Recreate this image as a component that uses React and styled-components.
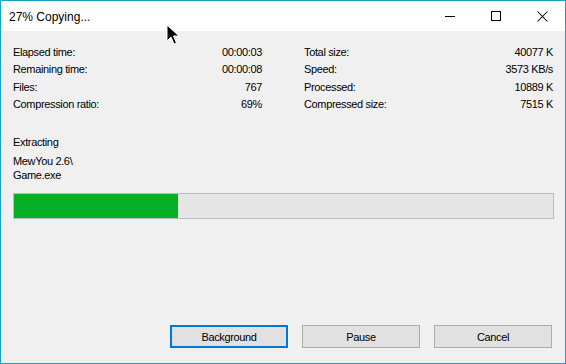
import React from "react";
import styled, { createGlobalStyle } from "styled-components";

const Global = createGlobalStyle`
  html, body { margin: 0; padding: 0; background: #ffffff; }
  * { box-sizing: border-box; }
`;

const Window = styled.div`
  position: relative;
  width: 566px;
  height: 364px;
  border: 1px solid #1ba1c6;
  background: #f0f0f0;
  display: flex;
  flex-direction: column;
  font-family: "Liberation Sans", Arial, sans-serif;
  color: #000;
  overflow: hidden;
`;

const TitleBar = styled.div`
  height: 30px;
  background: #ffffff;
  display: flex;
  align-items: center;
  flex-shrink: 0;
`;

const Title = styled.div`
  flex: 1;
  padding-left: 8px;
  font-size: 12px;
  line-height: 30px;
  padding-top: 1px;
`;

const CaptionButton = styled.div`
  width: 46px;
  height: 30px;
  display: flex;
  align-items: center;
  justify-content: center;
  svg { display: block; }
`;

const Body = styled.div`
  flex: 1;
  display: flex;
  flex-direction: column;
  padding: 12.5px 12px 15px 12px;
  font-size: 11px;
  letter-spacing: -0.35px;
`;

const Stats = styled.div`
  display: grid;
  grid-template-columns: 249px 249px;
  column-gap: 42px;
`;

const Column = styled.div`
  display: flex;
  flex-direction: column;
`;

const StatRow = styled.div`
  display: flex;
  justify-content: space-between;
  height: 17.6px;
  line-height: 17.6px;
`;

const Label = styled.span``;
const Value = styled.span`
  text-align: right;
`;

const Status = styled.div`
  margin-top: 21.5px;
  line-height: 14px;
`;

const Path = styled.div`
  margin-top: 5px;
  line-height: 14px;
`;

const Progress = styled.div`
  margin-top: 11px;
  width: 541px;
  height: 26px;
  border: 1px solid #bcbcbc;
  background: #e6e6e6;
`;

const ProgressFill = styled.div`
  height: 100%;
  background: #06b025;
`;

const Buttons = styled.div`
  margin-top: auto;
  display: flex;
  justify-content: flex-end;
  gap: 14px;
  padding-right: 1px;
`;

const Button = styled.div`
  width: 118px;
  height: 23px;
  display: flex;
  align-items: center;
  justify-content: center;
  background: #e1e1e1;
  border: ${(p) => (p.$default ? "2px solid #0078d7" : "1px solid #adadad")};
  font-size: 11px;
  padding-top: 1px;
`;

const Cursor = styled.svg`
  position: absolute;
  left: 165px;
  top: 23px;
`;

const left = [
  ["Elapsed time:", "00:00:03"],
  ["Remaining time:", "00:00:08"],
  ["Files:", "767"],
  ["Compression ratio:", "69%"],
];
const right = [
  ["Total size:", "40077 K"],
  ["Speed:", "3573 KB/s"],
  ["Processed:", "10889 K"],
  ["Compressed size:", "7515 K"],
];

export default function App() {
  return (
    <>
      <Global />
      <Window>
        <TitleBar>
          <Title>27% Copying...</Title>
          <CaptionButton>
            <svg width="10" height="10" viewBox="0 0 10 10">
              <rect x="0" y="5" width="10" height="1" fill="#000" />
            </svg>
          </CaptionButton>
          <CaptionButton>
            <svg width="10" height="10" viewBox="0 0 10 10">
              <rect x="0.5" y="0.5" width="9" height="9" fill="none" stroke="#000" strokeWidth="1" />
            </svg>
          </CaptionButton>
          <CaptionButton>
            <svg width="11" height="11" viewBox="0 0 11 11">
              <path d="M0.5 0.5 L10.5 10.5 M10.5 0.5 L0.5 10.5" stroke="#000" strokeWidth="1.05" />
            </svg>
          </CaptionButton>
        </TitleBar>
        <Body>
          <Stats>
            <Column>
              {left.map(([l, v]) => (
                <StatRow key={l}>
                  <Label>{l}</Label>
                  <Value>{v}</Value>
                </StatRow>
              ))}
            </Column>
            <Column>
              {right.map(([l, v]) => (
                <StatRow key={l}>
                  <Label>{l}</Label>
                  <Value>{v}</Value>
                </StatRow>
              ))}
            </Column>
          </Stats>
          <Status>Extracting</Status>
          <Path>
            MewYou 2.6\
            <br />
            Game.exe
          </Path>
          <Progress>
            <ProgressFill style={{ width: "164px" }} />
          </Progress>
          <Buttons>
            <Button $default>Background</Button>
            <Button>Pause</Button>
            <Button>Cancel</Button>
          </Buttons>
        </Body>
        <Cursor width="14" height="22" viewBox="0 0 14 22">
          <path
            d="M1 1 L1 17 L5 13 L8 20 L10.5 19 L7.5 12 L13 12 Z"
            fill="#000"
            stroke="#fff"
            strokeWidth="1"
            strokeLinejoin="miter"
          />
        </Cursor>
      </Window>
    </>
  );
}
